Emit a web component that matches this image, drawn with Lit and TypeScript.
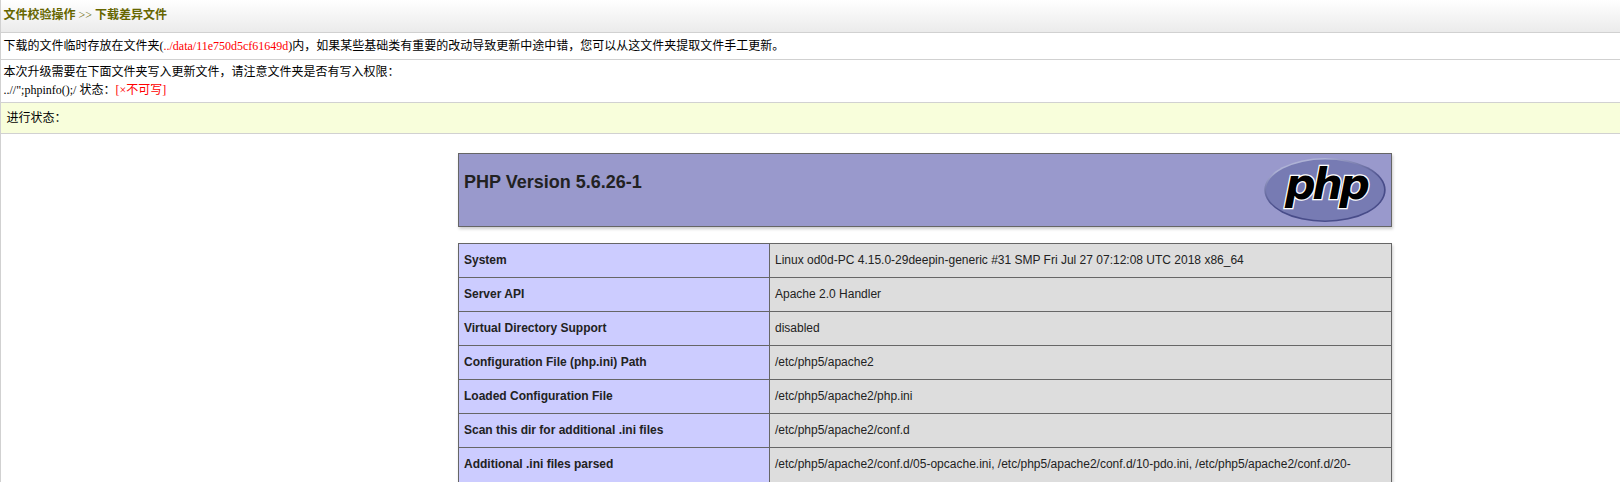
import { LitElement, html, css } from "lit";
import { customElement } from "lit/decorators.js";

const ROWS: [string, string][] = [
  ["System", "Linux od0d-PC 4.15.0-29deepin-generic #31 SMP Fri Jul 27 07:12:08 UTC 2018 x86_64"],
  ["Server API", "Apache 2.0 Handler"],
  ["Virtual Directory Support", "disabled"],
  ["Configuration File (php.ini) Path", "/etc/php5/apache2"],
  ["Loaded Configuration File", "/etc/php5/apache2/php.ini"],
  ["Scan this dir for additional .ini files", "/etc/php5/apache2/conf.d"],
  ["Additional .ini files parsed", "/etc/php5/apache2/conf.d/05-opcache.ini, /etc/php5/apache2/conf.d/10-pdo.ini, /etc/php5/apache2/conf.d/20-"],
];

@customElement("php-logo")
export class PhpLogo extends LitElement {
  static styles = css`
    :host { display: block; width: 122px; height: 66px; }
    svg { display: block; overflow: visible; }
    .word {
      font: italic bold 43px "DejaVu Sans", sans-serif;
      fill: #000;
      stroke: #fff;
      stroke-width: 2.6px;
      paint-order: stroke;
    }
  `;
  render() {
    return html`
      <svg width="122" height="66" viewBox="0 0 122 66">
        <defs>
          <radialGradient id="rim" cx="0.25" cy="0" r="1">
            <stop offset="0.25" stop-color="#aeb2d5" />
            <stop offset="0.8" stop-color="#484c89" />
          </radialGradient>
        </defs>
        <ellipse cx="61" cy="33" rx="60.7" ry="32" fill="url(#rim)" />
        <ellipse cx="61" cy="33" rx="59" ry="30.4" fill="#777bb3" />
        <text class="word" x="21" y="42" textLength="85" lengthAdjust="spacing">php</text>
      </svg>
    `;
  }
}

@customElement("php-info")
export class PhpInfo extends LitElement {
  static styles = css`
    :host {
      display: flex;
      flex-direction: column;
      gap: 16px;
      width: 934px;
      font: 12px/17px "Liberation Sans", Arial, sans-serif;
      color: #222;
    }
    .banner, .table {
      box-sizing: border-box;
      border: 1px solid #666;
      box-shadow: 1px 2px 3px #ccc;
    }
    .banner {
      display: flex;
      justify-content: space-between;
      align-items: flex-start;
      height: 74px;
      padding: 3px 5px 0 5px;
      background: #9999cc;
    }
    .title { margin: 15px 0 0; font-size: 18px; line-height: 21px; font-weight: bold; }
    .table { background: #ddd; }
    .row {
      display: grid;
      grid-template-columns: 310px 1fr;
      height: 33px;
      border-bottom: 1px solid #666;
    }
    .row:last-child { height: 50px; border-bottom: none; }
    .key, .value { padding: 8px 5px; white-space: nowrap; }
    .key { background: #ccccff; font-weight: bold; }
    .value { border-left: 1px solid #666; }
  `;
  render() {
    return html`
      <div class="banner">
        <h1 class="title">PHP Version 5.6.26-1</h1>
        <php-logo></php-logo>
      </div>
      <div class="table">
        ${ROWS.map(([k, v]) => html`<div class="row"><div class="key">${k}</div><div class="value">${v}</div></div>`)}
      </div>
    `;
  }
}

@customElement("app-root")
export class AppRoot extends LitElement {
  static styles = css`
    :host {
      display: block;
      box-sizing: border-box;
      height: 482px;
      overflow: hidden;
      background: #fff;
      border-left: 1px solid #d1d1d1;
      font: 12px/18px "Liberation Serif", "Noto Sans CJK SC", serif;
      color: #000;
    }
    .bar { box-sizing: border-box; border-bottom: 1px solid #d1d1d1; padding-left: 2.5px; }
    .head {
      height: 33px;
      padding-top: 6px;
      background: linear-gradient(#fff, #ebebeb);
      color: #666600;
    }
    .note { height: 27px; padding-top: 4px; }
    .perm { height: 43px; padding-top: 3px; }
    .status { height: 31px; padding: 6px 0 0 5.5px; background: #f8fedb; }
    .alert { color: #f00; }
    .info { display: flex; padding: 19px 0 0 457px; }
  `;
  render() {
    return html`
      <div class="bar head"><b>文件校验操作</b> &gt;&gt; <b>下载差异文件</b></div>
      <div class="bar note">下载的文件临时存放在文件夹(<span class="alert">../data/11e750d5cf61649d</span>)内，如果某些基础类有重要的改动导致更新中途中错，您可以从这文件夹提取文件手工更新。</div>
      <div class="bar perm">本次升级需要在下面文件夹写入更新文件，请注意文件夹是否有写入权限：<br />..//";phpinfo();/ 状态：<span class="alert">[×不可写]</span></div>
      <div class="bar status">进行状态：</div>
      <div class="info"><php-info></php-info></div>
    `;
  }
}
